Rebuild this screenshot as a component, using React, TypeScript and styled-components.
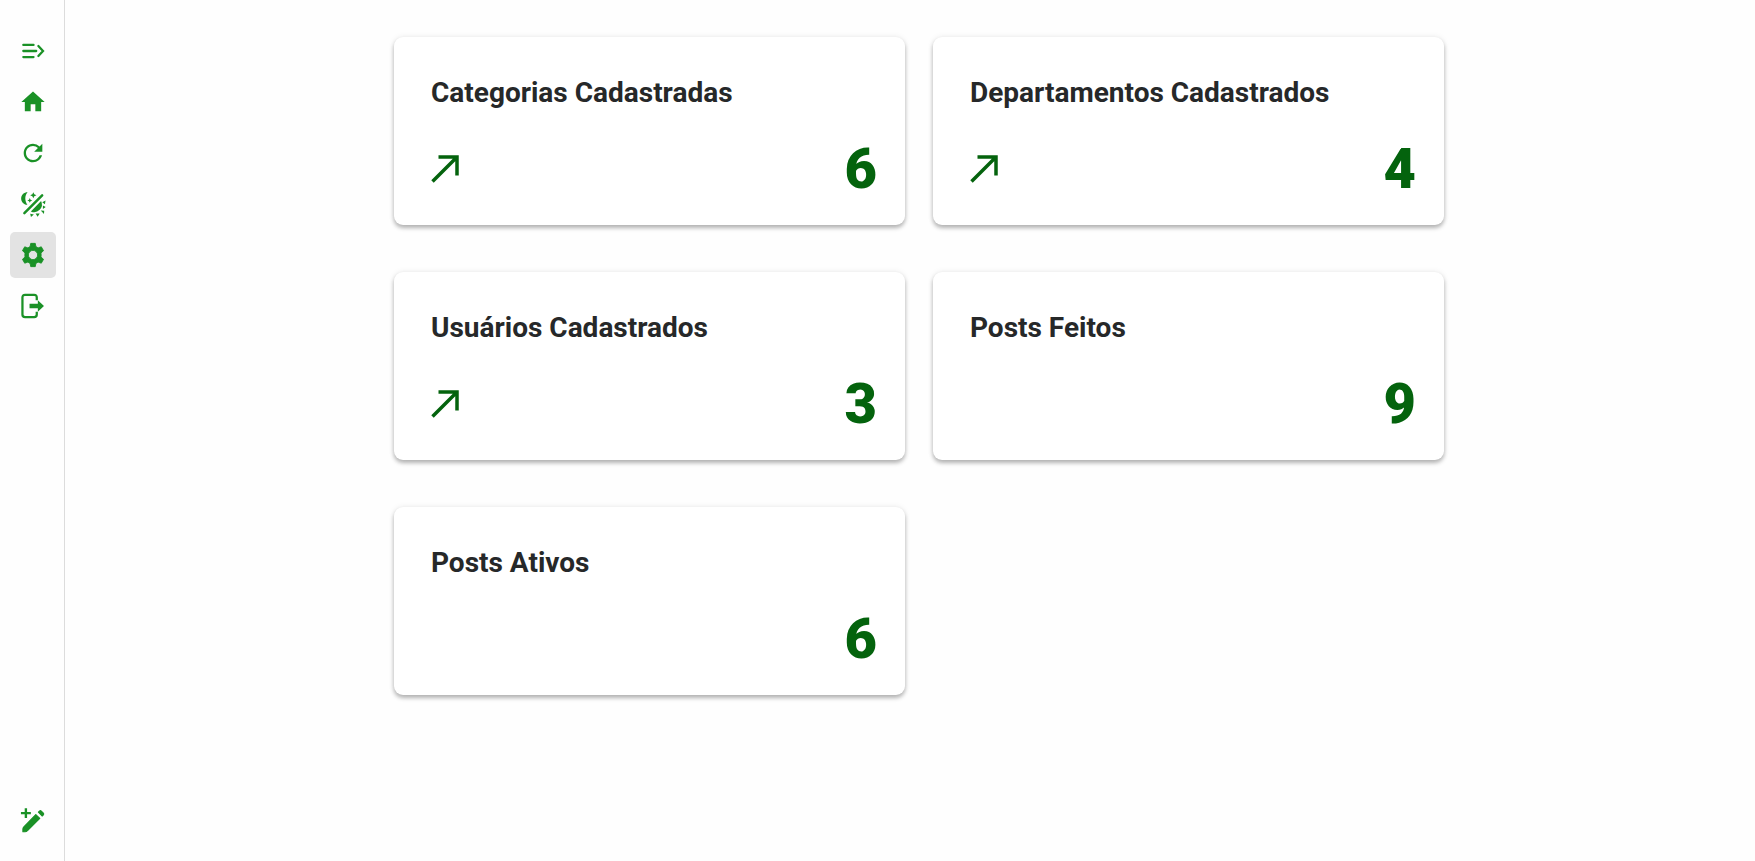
import React from "react";
import styled, { createGlobalStyle } from "styled-components";
import { MdHome, MdRefresh } from "react-icons/md";

const GlobalStyle = createGlobalStyle`
  * { box-sizing: border-box; }
  body {
    margin: 0;
    background: #fefefe;
    font-family: Roboto, "Liberation Sans", sans-serif;
    color: #262829;
  }
`;

const Layout = styled.div`
  display: flex;
  min-height: 100vh;
`;

const Sidebar = styled.nav`
  flex: 0 0 65px;
  display: flex;
  flex-direction: column;
  justify-content: space-between;
  align-items: center;
  padding: 28px 0 18px 1px;
  border-right: 1px solid #dcdcdc;
`;

const NavGroup = styled.div`
  display: flex;
  flex-direction: column;
  gap: 5px;
`;

const NavButton = styled.button<{ $active?: boolean }>`
  display: flex;
  align-items: center;
  justify-content: center;
  width: 46px;
  height: 46px;
  padding: 0;
  border: 0;
  border-radius: 5px;
  background: ${({ $active }) => ($active ? "#e3e3e3" : "transparent")};
  color: #1a9126;
  cursor: pointer;

  svg {
    width: 28px;
    height: 28px;
  }
`;

const Main = styled.main`
  flex: 1;
  padding: 37px 24px 37px 42px;
`;

const CardGrid = styled.div`
  display: grid;
  grid-template-columns: repeat(2, minmax(0, 1fr));
  gap: 47px 28px;
  width: 100%;
  max-width: 1050px;
  margin: 0 auto;
`;

const Card = styled.section`
  display: flex;
  flex-direction: column;
  justify-content: space-between;
  min-height: 188px;
  padding: 37px 28px 24px 37px;
  border-radius: 9px;
  background: #fff;
  box-shadow: 0 3px 4px rgba(0, 0, 0, 0.28), 0 0 6px rgba(0, 0, 0, 0.08);
`;

const CardTitle = styled.h2`
  margin: 0;
  font-size: 28px;
  line-height: 38px;
  font-weight: 700;
`;

const CardFooter = styled.div`
  display: flex;
  align-items: center;
  justify-content: space-between;
`;

const CardLink = styled.a`
  display: flex;
  color: #04630d;

  svg {
    width: 28px;
    height: 28px;
  }
`;

const Count = styled.strong`
  margin-left: auto;
  color: #04630d;
  font-size: 56px;
  line-height: 64px;
  font-weight: 900;
`;

const ExpandIcon = () => (
  <svg viewBox="-1 -1 26 26" fill="none" stroke="currentColor" strokeWidth="2.1" strokeLinecap="round" aria-hidden="true">
    <path d="M3 6.4h9.500M3 12h12M3 17.600h9.500" />
    <path d="M17 7.400l4.300 4.600-4.300 4.600" />
  </svg>
);

const ThemeIcon = () => (
  <svg viewBox="-1 -1 26 26" fill="currentColor" aria-hidden="true">
    <path d="M4 20.500 20.500 4" stroke="currentColor" strokeWidth="2.300" strokeLinecap="round" />
    <path d="M7 1.200C4.200 4 4.200 9 6.800 12.800 3 12.600 1 9.800 1 6.900 1 3.700 3.600 1.200 7 1.200Z" />
    <path d="m12.300 1 .9 1.900 2 .9-2 .9-.9 1.900-.9-1.900-2-.9 2-.9ZM9 6.500l.7 1.500 1.600.7-1.600.7L9 10.900l-.7-1.500-1.600-.7L8.300 8Z" />
    <path d="M19.500 9.200A7.200 7.200 0 0 1 10 18.900Z" />
    <path d="m20.600 10.400 3-1.600-.5 3.400ZM21.200 13.300l2.600 1.600-2.600 1.800ZM19.200 18l3.200.2-.2 3.200ZM14.400 20.900h3.800l-1.900 2.900ZM9.400 21l3.400.7-2.700 2.300Z" />
  </svg>
);

const SettingsIcon = () => (
  <svg viewBox="-1 -1 26 26" fill="currentColor" aria-hidden="true">
    <path
      fillRule="evenodd"
      stroke="currentColor"
      strokeWidth=".8"
      strokeLinejoin="round"
      d="M9.900 1.200h4.200l.6 3 2 1.200 3-1 2.100 3.600-2.400 2.100c.2 1.200.2 2.600 0 3.800l2.400 2.100-2.100 3.600-3-1-2 1.200-.6 3H9.900l-.6-3-2-1.200-3 1L2.200 16l2.400-2.100a12 12 0 0 1 0-3.800L2.200 8l2.100-3.600 3 1 2-1.200ZM12 7.700a4.300 4.300 0 1 0 0 8.600 4.300 4.300 0 0 0 0-8.600Z"
    />
  </svg>
);

const LogoutIcon = () => (
  <svg viewBox="-1 -1 26 26" fill="none" stroke="currentColor" strokeWidth="2.100" aria-hidden="true">
    <path d="M15.500 6.700V4q0-2.400-2.400-2.400H4.600q-2.400 0-2.400 2.400v16q0 2.400 2.400 2.400h8.500q2.400 0 2.400-2.400v-2.700" />
    <path d="M8.800 9.800H16.500V6.700l5.700 5.300-5.700 5.300v-3.100H8.800Z" fill="currentColor" stroke="none" />
  </svg>
);

const CreateIcon = () => (
  <svg viewBox="-1 -1 26 26" fill="currentColor" stroke="currentColor" strokeLinejoin="round" aria-hidden="true">
    <path d="M5.400 1V10.200M.8 5.600H10" strokeWidth="2.200" />
    <path d="M14.600 6.900 18.300 10.600 6.900 21.900Q5.800 22.900 4.600 22.900H2.600V20.400Q2.600 19.200 3.500 18.300Z" strokeWidth="1" />
    <path d="m17 4.700 1-1q.9-.8 1.700 0l1.900 1.900q.8.9 0 1.700l-1 1Z" strokeWidth="1" />
  </svg>
);

const ArrowIcon = () => (
  <svg viewBox="0 0 28 28" fill="none" stroke="currentColor" strokeWidth="3.500" aria-hidden="true">
    <path d="M7.500 2H26V20.500M26 2 1.500 26.500" />
  </svg>
);

const navItems = [
  { label: "Expandir menu", icon: <ExpandIcon /> },
  { label: "Início", icon: <MdHome /> },
  { label: "Atualizar", icon: <MdRefresh /> },
  { label: "Alternar tema", icon: <ThemeIcon /> },
  { label: "Configurações", icon: <SettingsIcon />, active: true },
  { label: "Sair", icon: <LogoutIcon /> },
];

const stats = [
  { title: "Categorias Cadastradas", count: 6, href: "#categorias" },
  { title: "Departamentos Cadastrados", count: 4, href: "#departamentos" },
  { title: "Usuários Cadastrados", count: 3, href: "#usuarios" },
  { title: "Posts Feitos", count: 9 },
  { title: "Posts Ativos", count: 6 },
];

export default function App() {
  return (
    <Layout>
      <GlobalStyle />
      <Sidebar>
        <NavGroup>
          {navItems.map((item) => (
            <NavButton key={item.label} type="button" aria-label={item.label} $active={item.active}>
              {item.icon}
            </NavButton>
          ))}
        </NavGroup>
        <NavButton type="button" aria-label="Criar post">
          <CreateIcon />
        </NavButton>
      </Sidebar>
      <Main>
        <CardGrid>
          {stats.map((stat) => (
            <Card key={stat.title}>
              <CardTitle>{stat.title}</CardTitle>
              <CardFooter>
                {stat.href && (
                  <CardLink href={stat.href} aria-label={stat.title}>
                    <ArrowIcon />
                  </CardLink>
                )}
                <Count>{stat.count}</Count>
              </CardFooter>
            </Card>
          ))}
        </CardGrid>
      </Main>
    </Layout>
  );
}
